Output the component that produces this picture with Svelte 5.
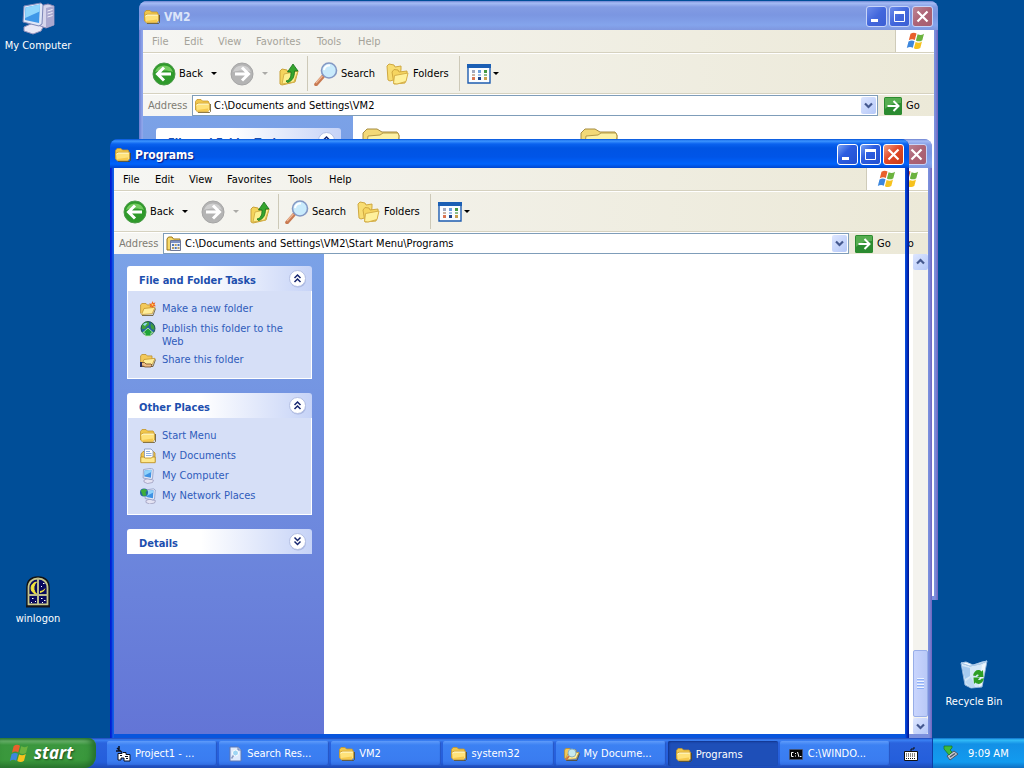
<script>
  const menus = ['File', 'Edit', 'View', 'Favorites', 'Tools', 'Help'];

  const fileTasks = [
    { icon: 'newfolder', text: 'Make a new folder' },
    { icon: 'publish', text: 'Publish this folder to the Web' },
    { icon: 'share', text: 'Share this folder' }
  ];
  const places = [
    { icon: 'folder', text: 'Start Menu' },
    { icon: 'documents', text: 'My Documents' },
    { icon: 'computer', text: 'My Computer' },
    { icon: 'network', text: 'My Network Places' }
  ];
  const tasks = [
    { icon: 'project', text: 'Project1 - ...' },
    { icon: 'searchdoc', text: 'Search Res...' },
    { icon: 'folder', text: 'VM2' },
    { icon: 'folder', text: 'system32' },
    { icon: 'searchfolder', text: 'My Docume...' },
    { icon: 'folder', text: 'Programs', active: true },
    { icon: 'cmd', text: 'C:\\WINDO...' }
  ];
</script>

{#snippet folderShape()}
  <path d="M3 14.500h11.500l1-1V6" fill="none" stroke="#5c4710" opacity=".75" />
  <path d="M.5 12V3.500l1.500-2h4L7.500 3H13l.8 1V7" fill="#f0c64b" stroke="#c4962a" stroke-width=".8" />
  <path d="m1 12.500-.4-6L3 5.300h11.500V12l-1.700 1.700H2.500z" fill="#ffe27a" stroke="#c9992c" stroke-width=".8" />
  <path d="m1.500 7.200 2-1.100h10.200" fill="none" stroke="#fffbd6" />
  <path d="m2 12 11-1.500v2l-1 .7H2.700z" fill="#f6c94e" />
{/snippet}

{#snippet openFolderShape()}
  <path d="M2 14.500h11l2.500-7" fill="none" stroke="#5c4710" opacity=".75" />
  <path d="M.6 12.500V3.800L2 2.500h4l1.200 1.400H12V7" fill="#f3c95a" stroke="#bd8f2c" stroke-width=".8" />
  <path d="m1.500 13.500 2.500-6 11-1.200-2.800 6.500z" fill="#ffed9a" stroke="#c4962a" stroke-width=".8" />
{/snippet}

{#snippet screenShape()}
  <path d="M4 12 8 10.500l5.500 1.700-1 2.300-5 1-3.500-1.500z" fill="#e4e3f3" stroke="#8a88ad" stroke-width=".6" />
  <path d="m3.500 1.500 8-1.200L13.300 1.500l-.8 9.200-1.600.8-7.800-1.500z" fill="#e3e8f6" stroke="#8490bb" stroke-width=".7" />
  <path d="m4.500 2.600 7-.8-.6 8-6.600-1.200z" fill="#3f93e4" />
  <path d="m4.500 2.600 7-.8-.2 2.200-6.800 3.500z" fill="#8fd3fb" />
{/snippet}

{#snippet icon(name, size = 16)}
  <svg class="icon" width={size} height={size} viewBox="0 0 16 16" aria-hidden="true">
    {#if name === 'folder'}
      {@render folderShape()}
    {:else if name === 'newfolder'}
      {@render openFolderShape()}
      <path d="m12.500 0 .7 2 2.200-.6-1 2.100 1.500 1.700-2.300.1-.6 2-1.200-1.800-2.300.7 1-2L9 2.500l2.500.3z" fill="#f0641c" />
      <circle cx="12.500" cy="3.800" r="1" fill="#ffd35c" />
    {:else if name === 'publish'}
      <circle cx="8" cy="7.500" r="7" fill="#23659f" stroke="#12492e" stroke-width=".8" />
      <path d="M2 4c2-3 5-3.500 7-2.500L9 4 7 5.500 5 8 2 8zM11 2l3 3 .5 4-3-1-1-3z" fill="#3f9f3c" />
      <path d="M3 3.500C4.500 2 6 1.800 7.500 2L5 5z" fill="#8fd8ef" />
      <path d="m8 7 5.500 5H11v3H5v-3H2.500z" fill="#1fa438" stroke="#c9efb8" stroke-width=".8" />
    {:else if name === 'share'}
      {@render openFolderShape()}
      <path d="M1.500 10.500h3l1.500 1.500h5l1 1-1 2H5l-2-1H1.500z" fill="#eebd86" stroke="#60380e" stroke-width=".7" />
      <path d="M0 10h2v5H0z" fill="#2a2f60" />
    {:else if name === 'documents'}
      <path d="M1 14V6l2-2.500h10.500L15 5v9z" fill="#eec452" stroke="#b58a26" stroke-width=".8" />
      <path d="M4.500 11V1h6.500l2 2v8z" fill="#fff" stroke="#7f93be" stroke-width=".8" />
      <path d="M6 3.500h4M6 5.500h5.500M6 7.500h5.500" stroke="#8fb0e4" />
      <path d="M.8 14.700V9h3l1 1h6.700l.8-1h2.900v5.700z" fill="#ffe88c" stroke="#b98a1b" stroke-width=".8" />
    {:else if name === 'computer'}
      {@render screenShape()}
    {:else if name === 'network'}
      <g transform="translate(2 .5)">{@render screenShape()}</g>
      <circle cx="4" cy="4.500" r="4" fill="#25679f" />
      <path d="M.8 2.500c2-2 4.500-2 6.200 0L5.500 4.500l1 3-3.500.5z" fill="#3fae3a" />
    {:else if name === 'programs'}
      <path d="M1 14V3l1.500-2H6l1.500 2H14v11z" fill="#f7da6b" stroke="#9b7417" />
      <path d="M4.500 4.500h10v10h-10z" fill="#f2f4fb" stroke="#6d7796" />
      <path d="M5 5h9v2H5z" fill="#7d8fc4" />
      <path d="M6 8h2v2H6zM11.500 8h2v2h-2zM8.700 11h2v2h-2z" fill="#4d75bd" />
      <path d="M8.700 8h2v2h-2zM6 11h2v2H6zM11.500 11h2v2h-2z" fill="#b79c60" />
    {:else if name === 'searchdoc'}
      <path d="M3 1h8l3 3v11H3z" fill="#dfeafc" stroke="#5f78b4" />
      <path d="M11 1v3h3" fill="#b8c9ea" stroke="#6f86b9" />
      <circle cx="8.500" cy="7" r="3" fill="#9fd6f4" stroke="#fff" />
      <path d="m6.500 9.500-2 3" stroke="#8c9dc4" stroke-width="1.500" />
    {:else if name === 'searchfolder'}
      {@render openFolderShape()}
      <circle cx="8" cy="7" r="4" fill="#c6e9ee" stroke="#8fb3bd" />
      <path d="m5 10-3 4" stroke="#d0753f" stroke-width="2" />
    {:else if name === 'project'}
      <path d="m2 2 5 4.500M4 0v3M1 5h4" stroke="#0b1020" stroke-width="1.500" />
      <path d="M3 7.500h4l1-1h3v2h4V15H9v-3H6v2H3z" fill="#fff" stroke="#0b1020" />
      <path d="M5 9.500h2M10 10.500h3M11 12.500h2" stroke="#0b1020" />
    {:else if name === 'cmd'}
      <path d="M1.500 3.500h13v10h-13z" fill="#060606" stroke="#555b70" stroke-width=".6" />
      <path d="M5.500 6.500h-2v4h2M7.500 7v1M7.500 9.500v1M9.500 6l1.500 5M12 10.500h1.500" fill="none" stroke="#fff" />
    {/if}
  </svg>
{/snippet}

{#snippet flag(size)}
  <svg width={size} height={size} viewBox="0 0 20 20" aria-hidden="true">
    <path d="M4.500 2.800c2.200-1.500 4-1.500 6-.3L8.800 9c-2-1.200-3.900-1-6 .3z" fill="#e8602c" />
    <path d="M11.600 3.200c2.200 1.200 4.200 1 6.400-.4L16.300 9.200c-2.200 1.500-4.200 1.500-6.400.3z" fill="#6cb33f" />
    <path d="M2.500 10.500c2.200-1.400 4-1.400 6-.2L6.800 16.800c-2-1.200-3.800-1-6 .3z" fill="#3d87dd" />
    <path d="M9.600 10.900c2.200 1.200 4.200 1 6.400-.4l-1.700 6.500c-2.200 1.500-4.200 1.400-6.400.2z" fill="#f7c21e" />
  </svg>
{/snippet}

{#snippet captionButtons(onlyClose)}
  {#if !onlyClose}
    <button class="cap" aria-label="Minimize">
      <svg width="19" height="19" viewBox="0 0 19 19"><path d="M4 12h7v3H4z" fill="#fff" /></svg>
    </button>
    <button class="cap" aria-label="Maximize">
      <svg width="19" height="19" viewBox="0 0 19 19"><path d="M4.500 4.500h10v10h-10z" fill="none" stroke="#fff" /><path d="M4 4h11v3H4z" fill="#fff" /></svg>
    </button>
  {/if}
  <button class="cap close" aria-label="Close">
    <svg width="19" height="19" viewBox="0 0 19 19"><path d="m4.500 4.500 10 10m0-10-10 10" stroke="#fff" stroke-width="2.200" /></svg>
  </button>
{/snippet}

{#snippet toolbar()}
  <div class="toolbar">
    <button class="tool back">
      <svg width="24" height="24" viewBox="0 0 24 24" aria-hidden="true">
        <circle cx="12" cy="12" r="11" fill="#2f9a2b" stroke="#4a9a48" />
        <path d="M3 10a9.500 9.500 0 0 1 18 0c-5-2-12-2-18 0z" fill="#74cc60" />
        <path d="m12 5.500-6.500 6.500 6.500 6.500M6.500 12H19" fill="none" stroke="#fff" stroke-width="3" />
      </svg>
      <span>Back</span>
    </button>
    <button class="drop" aria-label="Back history"><i class="arrow"></i></button>
    <button class="tool forward" aria-label="Forward">
      <svg width="24" height="24" viewBox="0 0 24 24" aria-hidden="true">
        <circle cx="12" cy="12" r="11" fill="#b4b4b4" stroke="#a5a5a5" />
        <path d="M3 10a9.500 9.500 0 0 1 18 0c-5-2-12-2-18 0z" fill="#cfcfcf" />
        <path d="m12 5.500 6.500 6.500-6.500 6.500M17.500 12H5" fill="none" stroke="#fff" stroke-width="3" />
      </svg>
    </button>
    <button class="drop faint" aria-label="Forward history"><i class="arrow"></i></button>
    <button class="tool up" aria-label="Up">
      <svg width="22" height="24" viewBox="0 0 22 24" aria-hidden="true">
        <path d="m2 9 2-2 5 1 1 2 8-2 2 1-3 11-13 3-2-1z" fill="#f4d45c" stroke="#c9a23a" />
        <path d="m4 22 2-10 14-3-4 11z" fill="#fdf08f" stroke="#d6b34a" />
        <path d="M8 19c4-1 5-4 5-9H9.500L15 2l5 7h-3.500c0 6-2 10-7 11.500z" fill="#35a52e" stroke="#16701b" stroke-width=".8" />
      </svg>
    </button>
    <div class="sep"></div>
    <button class="tool search">
      <svg width="24" height="24" viewBox="0 0 24 24" aria-hidden="true">
        <path d="m2 22.500 7-8" stroke="#c87a52" stroke-width="3.600" stroke-linecap="round" />
        <path d="m2 21 6.500-7" stroke="#efb896" stroke-width="1.200" />
        <circle cx="15" cy="8.500" r="7.500" fill="#c9ebfc" stroke="#8499c4" stroke-width="1.600" />
        <path d="M10 8c.5-3 3-5 6-4.500" fill="none" stroke="#fff" stroke-width="2" />
      </svg>
      <span>Search</span>
    </button>
    <button class="tool folders">
      <svg width="23" height="22" viewBox="0 0 23 22" aria-hidden="true">
        <path d="M1 3 3 1l5 1 1 2 6-1v3l-1 9-10 3-2-1z" fill="#f8dd72" stroke="#cfa840" />
        <path d="m6 9 2-2.500 4 .5 1 2 8-1v3l-2 9-11 1z" fill="#f6d560" stroke="#cfa840" />
        <path d="m7.500 20.500 1-8 13.500-2.500-2 8.500-9 2.500z" fill="#fff19c" stroke="#d6b04a" />
      </svg>
      <span>Folders</span>
    </button>
    <div class="sep"></div>
    <button class="tool views" aria-label="Views">
      <svg width="24" height="20" viewBox="0 0 24 20" aria-hidden="true">
        <path d="M1 1h22v18H1z" fill="#fbfdff" stroke="#1e5cb0" stroke-width="1.400" />
        <path d="M0 0h24v4H0z" fill="#1b5fb4" />
        <path d="M5 6h3v3H5z" fill="#a3a9bf" /><path d="M11 6h3v3h-3z" fill="#6d9fdd" /><path d="M17 6h3v3h-3z" fill="#459a45" />
        <path d="M5 10h3v2H5z" fill="#c9b3a2" /><path d="M11 10h3v2h-3z" fill="#9fc0ea" /><path d="M17 10h3v2h-3z" fill="#8dbf8b" />
        <path d="M5 13h3v3H5z" fill="#da7552" /><path d="M11 13h3v3h-3z" fill="#20458a" /><path d="M17 13h3v3h-3z" fill="#c9a04c" />
      </svg>
      <i class="arrow"></i>
    </button>
  </div>
{/snippet}

{#snippet chevrons(down)}
  <svg width="19" height="19" viewBox="0 0 19 19" aria-hidden="true">
    <circle cx="10" cy="10.500" r="8" fill="#8796c9" opacity=".5" />
    <circle cx="9.500" cy="9.500" r="8" fill="#fff" stroke="#b3bfe3" />
    {#if down}
      <path d="m6.500 5.500 3 3 3-3m-6 4 3 3 3-3" fill="none" stroke="#16266f" stroke-width="1.500" />
    {:else}
      <path d="m6.500 9 3-3 3 3m-6 4 3-3 3 3" fill="none" stroke="#16266f" stroke-width="1.500" />
    {/if}
  </svg>
{/snippet}

{#snippet group(title, items, collapsed)}
  <section class="group">
    <button class="group-head"><span>{title}</span>{@render chevrons(collapsed)}</button>
    {#if items.length}
      <ul>
        {#each items as item}
          <li>{@render icon(item.icon)}<a href="#top">{item.text}</a></li>
        {/each}
      </ul>
    {/if}
  </section>
{/snippet}

{#snippet addressBar(id, path, pathIcon)}
  <div class="address">
    {#if path}
      <label for={id}>Address</label>
      <div class="combo">
        {@render icon(pathIcon)}
        <input {id} type="text" value={path} />
        <button class="pick" aria-label="Show addresses">
          <svg width="15" height="17" viewBox="0 0 15 17"><path d="m4 6.500 3.500 3.500L11 6.500" fill="none" stroke="#45598f" stroke-width="2.200" /></svg>
        </button>
      </div>
    {/if}
    <button class="go">
      <svg width="18" height="18" viewBox="0 0 18 18" aria-hidden="true">
        <rect width="18" height="18" rx="1.500" fill="#2b8b30" />
        <path d="M1 1h16v5C10 6 5 8 1 12z" fill="#56ad50" />
        <path d="M3.500 9H14M9.500 4l5 5-5 5" fill="none" stroke="#fff" stroke-width="2" />
      </svg>
      <span>Go</span>
    </button>
  </div>
{/snippet}

<div class="screen" id="top">
  <main class="desktop">
    <a class="shortcut mycomp" href="#top">
      <svg width="34" height="34" viewBox="0 0 34 34" aria-hidden="true">
        <path d="m19 5 8-2 6 2v19l-8 3-6-2z" fill="#d7d6ec" stroke="#8886b3" />
        <path d="m25 7 8-2v19l-8 3z" fill="#aaa8cf" />
        <path d="m26.500 10 5-1.500m-5 4.500 5-1.500m-5 4.500 5-1.500" stroke="#f0effa" />
        <path d="m3 26 9-4 10 4-2 4-8 3-9-3z" fill="#e9e8f6" stroke="#9492bc" />
        <path d="m3 5 17-3 2 2-1 19-3 2L2 21z" fill="#dfe6f7" stroke="#7d87b8" />
        <path d="m4.500 6.500 14.500-3-1 18.500-14-3z" fill="#3f98e8" />
        <path d="m4.500 6.500 14.500-3-.4 7L4.200 17z" fill="#8fd6fd" />
      </svg>
      <span>My Computer</span>
    </a>
    <a class="shortcut winlogon" href="#top">
      <svg width="26" height="32" viewBox="0 0 26 32" aria-hidden="true">
        <path d="M2 30V12C2 4 7 1 13 1s11 3 11 11v18z" fill="#0a0a50" stroke="#111" stroke-width="1.500" />
        <path d="M3.500 28.500V12c0-6 4-9.500 9.500-9.500s9.500 3.500 9.500 9.500v16.500z" fill="#08085c" stroke="#c9c98a" stroke-width="1.800" />
        <path d="M11.500 6c-7 1-7.500 11 0 12-3.500-3.500-3.500-8.500 0-12z" fill="#f2e43d" stroke="#f2e43d" />
        <path d="M15 17c3-.5 5-2.500 5.500-5-2 2-3.500 3-5.500 3z" fill="#f2e43d" />
        <path d="M13 2v26M3 19h20" stroke="#b9b98c" stroke-width="2" />
        <path d="M7 22.500h1.500M10 25.500h1M6 26.500h1M16 22.500h1.500M19 24.500h1.500M17 26.500h1M18 7.500h1.500M16 10.500h1" stroke="#fff" />
        <path d="M1 29.500h24v2H1z" fill="#15151a" />
      </svg>
      <span>winlogon</span>
    </a>
    <a class="shortcut bin" href="#top">
      <svg width="32" height="32" viewBox="0 0 32 32" aria-hidden="true">
        <path d="m3 6 4 22 6 3 11-1 5-26-7 3-10 2z" fill="#d4e8f8" stroke="#8fb3db" />
        <path d="m3 6 9 3 10-2 7-3-5 1-9 3-7-3z" fill="#f3faff" stroke="#a8c8e8" />
        <path d="m4 9 3 13 5-3V11z" fill="#a5caef" />
        <path d="m7 25 6-5 4 10-4 1z" fill="#bcd8f2" />
        <path d="m24 8 4-2-4 22-3 2z" fill="#eef6fc" />
        <path d="M15 18.500c1-5 5.500-7 8.500-4l1.500-1.500.5 7h-6.500l2-2c-1.500-1-2.500-.5-3.500 1zM26 21.500c-1 5-5.500 7-8.500 4L16 27l-.5-6.500H22l-2 2c1.500 1 2.500.5 3.500-1z" fill="#2d9e25" />
      </svg>
      <span>Recycle Bin</span>
    </a>

    <article class="window inactive vm">
      <header class="title">{@render icon('folder')}<h2>VM2</h2>{@render captionButtons(false)}</header>
      <nav class="menu">
        {#each menus as m}<button>{m}</button>{/each}
        <div class="throbber">{@render flag(20)}</div>
      </nav>
      {@render toolbar()}
      {@render addressBar('addr-vm', 'C:\\Documents and Settings\\VM2', 'folder')}
      <div class="content">
        <aside>{@render group('File and Folder Tasks', [], false)}</aside>
        <div class="files">
          {#each [0, 1] as n (n)}
            <svg width="40" height="32" viewBox="0 0 40 32" aria-hidden="true">
              <path d="M1 30V5l4-4h10l5 3h15l2 3v23z" fill="#f3d977" stroke="#a58d45" />
              <path d="m3 30 3-22 12-1 3-2h15l1 3-3 22z" fill="#fdf2a5" stroke="#b59b4a" />
            </svg>
          {/each}
        </div>
      </div>
    </article>

    <article class="window inactive behind">
      <header class="title">{@render captionButtons(true)}</header>
      <div class="menu"><div class="throbber">{@render flag(20)}</div></div>
      <div class="toolbar"></div>
      {@render addressBar('', '', '')}
      <div class="content">
        <div class="files"></div>
        <div class="scroll">
          <button aria-label="Scroll up"><svg width="15" height="16" viewBox="0 0 15 16"><path d="m4 9.500 3.500-3.500L11 9.500" fill="none" stroke="#45598f" stroke-width="2.200" /></svg></button>
          <div class="track"><div class="thumb"></div></div>
          <button aria-label="Scroll down"><svg width="15" height="16" viewBox="0 0 15 16"><path d="m4 6.500 3.500 3.500L11 6.500" fill="none" stroke="#45598f" stroke-width="2.200" /></svg></button>
        </div>
      </div>
    </article>

    <article class="window front">
      <header class="title">{@render icon('folder')}<h2>Programs</h2>{@render captionButtons(false)}</header>
      <nav class="menu">
        {#each menus as m}<button>{m}</button>{/each}
        <div class="throbber">{@render flag(20)}</div>
      </nav>
      {@render toolbar()}
      {@render addressBar('addr-programs', 'C:\\Documents and Settings\\VM2\\Start Menu\\Programs', 'programs')}
      <div class="content">
        <aside>
          {@render group('File and Folder Tasks', fileTasks, false)}
          {@render group('Other Places', places, false)}
          {@render group('Details', [], true)}
        </aside>
        <div class="files"></div>
      </div>
    </article>
  </main>

  <footer class="taskbar">
    <button class="start">{@render flag(21)}<span>start</span></button>
    <div class="tasks">
      {#each tasks as t}
        <button class="task" class:active={t.active}>{@render icon(t.icon)}<span>{t.text}</span></button>
      {/each}
    </div>
    <button class="keyboard" aria-label="Language bar">
      <svg width="14" height="14" viewBox="0 0 14 14"><path d="M7 4V2h3V0" fill="none" stroke="#111" /><path d="M.5 4.500h13v9H.5z" fill="#fff" stroke="#111" /><path d="M2 7h10M2 9h10M2 11.500h10" stroke="#111" stroke-dasharray="1 1" /></svg>
    </button>
    <div class="tray">
      <svg width="16" height="16" viewBox="0 0 16 16" aria-hidden="true">
        <path d="m4 11 7-5 4 3-8 6z" fill="#c3c8cf" stroke="#4b5566" />
        <path d="m7 12 5-3.500" stroke="#4b5566" stroke-width="1.500" />
        <path d="M1 1h8v2L7 5l2 2-3 3-5-6z" fill="#3fbb3b" stroke="#187222" stroke-width=".7" />
      </svg>
      <time>9:09 AM</time>
    </div>
  </footer>
</div>

<style>
  :global(body) {
    margin: 0;
    background: #004e98;
  }
  .screen {
    display: grid;
    grid-template-rows: 1fr 30px;
    height: 100vh;
    overflow: hidden;
    font: 11px/13px 'DejaVu Sans Condensed', 'DejaVu Sans', sans-serif;
    color: #000;
  }
  button {
    font: inherit;
    color: inherit;
    border: 0;
    padding: 0;
    background: none;
    text-align: left;
  }
  a {
    color: inherit;
    text-decoration: none;
  }
  svg {
    display: block;
    flex: none;
  }
  .desktop {
    position: relative;
    background: #004e98;
  }
  .shortcut {
    position: absolute;
    width: 76px;
    display: flex;
    flex-direction: column;
    align-items: center;
    gap: 4px;
    color: #fff;
    white-space: nowrap;
  }
  .mycomp { left: 0; top: 1px; }
  .winlogon { left: 0; top: 576px; }
  .bin { right: 12px; top: 657px; gap: 6px; }

  .window {
    position: absolute;
    width: 799px;
    height: 599px;
    box-sizing: border-box;
    display: flex;
    flex-direction: column;
    padding: 0 4px 4px;
    border-radius: 8px 8px 0 0;
    overflow: hidden;
    background: linear-gradient(90deg, #0019cf, #0831d9 2px, #166aee 3px, #0855dd 4px, #0855dd calc(100% - 4px), #0441d8 calc(100% - 3px), #00138c);
  }
  .inactive {
    background: linear-gradient(90deg, #6a7bd0, #8ea5ea 3px, #7b90dd calc(100% - 3px), #7163bd);
  }
  .vm { left: 139px; top: 1px; }
  .behind { left: 133px; top: 139px; }
  .front { left: 110px; top: 139px; }

  .title {
    display: flex;
    align-items: center;
    gap: 2px;
    height: 29px;
    flex: none;
    box-sizing: border-box;
    margin: 0 -4px;
    padding: 2px 5px 0;
    background: linear-gradient(#0050d8 0, #3d95ff 2px, #0a62ef 5px, #0054e3 9px, #0055e8 18px, #0063fb 25px, #0046cf 29px);
    color: #fff;
  }
  .inactive .title {
    background: linear-gradient(#6d82d0 0, #a6bcf5 2px, #839ce4 6px, #7b96e1 14px, #84a4ec 24px, #7f97df 29px);
    color: #dbe4f9;
  }
  .title h2 {
    flex: 1;
    margin: 0;
    padding: 1px 0 0 2px;
    font-size: 12px;
    line-height: 16px;
    text-shadow: 1px 1px 1px #0a1883;
  }
  .inactive h2 { text-shadow: none; }
  .behind .title { justify-content: flex-end; }
  .cap {
    width: 21px;
    height: 21px;
    box-sizing: border-box;
    border: 1px solid #fff;
    border-radius: 3px;
    background: linear-gradient(135deg, #7ba4f4, #2c5de0 40%, #2350cf);
  }
  .cap.close { background: linear-gradient(135deg, #f0a085, #e0492a 45%, #c83a12); }
  .inactive .cap {
    border-color: #c7d4f8;
    background: linear-gradient(135deg, #6d8cea, #4267dc 50%, #3c5fd4);
  }
  .inactive .cap.close { background: linear-gradient(135deg, #bd8595, #ac6375 50%, #a65d70); }

  .menu {
    display: grid;
    grid-template-columns: 32px 34px 38px 61px 41px 1fr auto;
    height: 22px;
    flex: none;
    padding-left: 9px;
    border-bottom: 1px solid #d5d1bf;
    background: linear-gradient(90deg, #f6f6f3, #ece9d8);
  }
  .inactive .menu { color: #a5a39a; }
  .throbber {
    grid-column: 7;
    display: flex;
    align-items: center;
    padding: 0 8px 0 10px;
    border-left: 1px solid #cfcbb9;
    background: #fff;
  }
  .toolbar {
    display: flex;
    align-items: center;
    height: 39px;
    flex: none;
    padding-left: 9px;
    border-top: 1px solid #fff;
    border-bottom: 1px solid #d6d2c0;
    background: linear-gradient(90deg, #f6f6f3, #ece9d8);
  }
  .tool {
    display: flex;
    align-items: center;
    gap: 4px;
    white-space: nowrap;
  }
  .back { gap: 3px; width: 59px; }
  .drop { width: 19px; display: flex; }
  .drop.faint { opacity: .3; width: 16px; }
  .forward { width: 32px; }
  .up { width: 29px; }
  .search { width: 72px; padding-left: 6px; gap: 3px; }
  .folders { width: 73px; }
  .search, .folders { box-sizing: content-box; }
  .views { padding-left: 7px; gap: 2px; }
  .arrow {
    border: 3px solid transparent;
    border-top-color: #000;
    border-bottom: 0;
  }
  .sep {
    width: 1px;
    height: 35px;
    background: #cdc9b8;
  }
  .address {
    display: flex;
    align-items: center;
    justify-content: flex-end;
    height: 21px;
    flex: none;
    padding: 0 14px 0 5px;
    border-top: 1px solid #fff;
    background: linear-gradient(90deg, #f6f6f3, #ece9d8);
  }
  .address label { width: 44px; color: #7f7c73; }
  .combo {
    flex: 1;
    display: flex;
    align-items: center;
    gap: 3px;
    height: 19px;
    padding: 0 1px 0 2px;
    border: 1px solid #7f9db9;
    background: #fff;
  }
  .combo input {
    flex: 1;
    min-width: 0;
    border: 0;
    padding: 0;
    font: inherit;
    background: none;
    outline: 0;
  }
  .pick, .scroll button {
    border-radius: 2px;
    background: linear-gradient(135deg, #dde6ff, #b5c8f8);
  }
  .go {
    display: flex;
    align-items: center;
    gap: 4px;
    width: 36px;
    margin-left: 6px;
  }
  .content {
    flex: 1;
    display: flex;
    min-height: 0;
    background: #fff;
  }
  aside {
    width: 185px;
    flex: none;
    display: flex;
    flex-direction: column;
    gap: 14px;
    padding: 12px 12px 0 13px;
    background: linear-gradient(#7ba2e7, #6375d6);
    color: #2f5cbb;
  }
  .group-head {
    display: flex;
    align-items: center;
    justify-content: space-between;
    width: 100%;
    height: 25px;
    padding: 0 5px 0 12px;
    border-radius: 3px 3px 0 0;
    background: linear-gradient(90deg, #fff 40%, #c6d3f7);
    font-weight: bold;
    color: #1d4fae;
  }
  .group-head span { padding-top: 3px; }
  .group ul {
    display: flex;
    flex-direction: column;
    gap: 4px;
    margin: 0;
    padding: 10px 24px 10px 12px;
    border: 1px solid #fff;
    border-top: 0;
    background: #d6dff7;
    list-style: none;
  }
  .group li {
    display: flex;
    gap: 6px;
    min-height: 16px;
  }
  .group li a { padding-top: 1px; }
  .files {
    flex: 1;
    display: flex;
    gap: 178px;
    padding: 12px 9px;
  }
  .scroll {
    width: 15px;
    display: flex;
    flex-direction: column;
    background: #f4f3ee;
    gap: 1px;
  }
  .track {
    flex: 1;
    display: flex;
    flex-direction: column;
    justify-content: flex-end;
  }
  .thumb {
    height: 65px;
    border: 1px solid #98aee8;
    border-radius: 2px;
    background:
      repeating-linear-gradient(#eef4fe 0 1px, #8cb0f8 1px 2px, transparent 2px 3px) center / 7px 11px no-repeat,
      linear-gradient(90deg, #c9d5fd, #b9c9f7);
  }

  .taskbar {
    position: relative;
    display: flex;
    background: linear-gradient(#1f45b8 0, #3b82f4 2px, #2a63de 5px, #245edb 24px, #1d49b4);
    color: #fff;
  }
  .start {
    display: flex;
    align-items: center;
    gap: 4px;
    width: 96px;
    box-sizing: border-box;
    padding-left: 9px;
    border-radius: 0 8px 12px 0;
    background: linear-gradient(#2f7f35 0, #6cb56e 3px, #3b973e 7px, #3a983c 22px, #2b7a30);
    box-shadow: inset -4px 0 6px #256f2b;
    font: italic bold 17px/22px 'Open Sans', sans-serif;
    text-shadow: 1px 1px 2px #1c4a1d;
  }
  .tasks {
    flex: 1;
    display: grid;
    grid-template-columns: repeat(7, 1fr);
    gap: 2px;
    padding: 3px 0 2px 11px;
  }
  .task {
    display: flex;
    align-items: center;
    gap: 4px;
    min-width: 0;
    padding-left: 8px;
    border-radius: 2px;
    background: linear-gradient(#5f9bfa 0, #3c81f3 4px, #3a7cf0 20px, #2f6adf);
    box-shadow: inset -1px -1px 1px #2554c4;
    white-space: nowrap;
  }
  .task.active {
    background: #1e4fb8;
    box-shadow: inset 1px 1px 2px #12348c;
    padding-top: 2px;
  }
  .keyboard {
    width: 42px;
    padding: 2px 0 0 14px;
  }
  .tray {
    display: flex;
    align-items: center;
    gap: 9px;
    width: 92px;
    box-sizing: border-box;
    padding-left: 10px;
    border-left: 1px solid #0b3fa8;
    background: linear-gradient(#0d6dc9 0, #33bdf8 2px, #1390e6 6px, #129bef 24px, #0e6fc2);
    white-space: nowrap;
  }
</style>
